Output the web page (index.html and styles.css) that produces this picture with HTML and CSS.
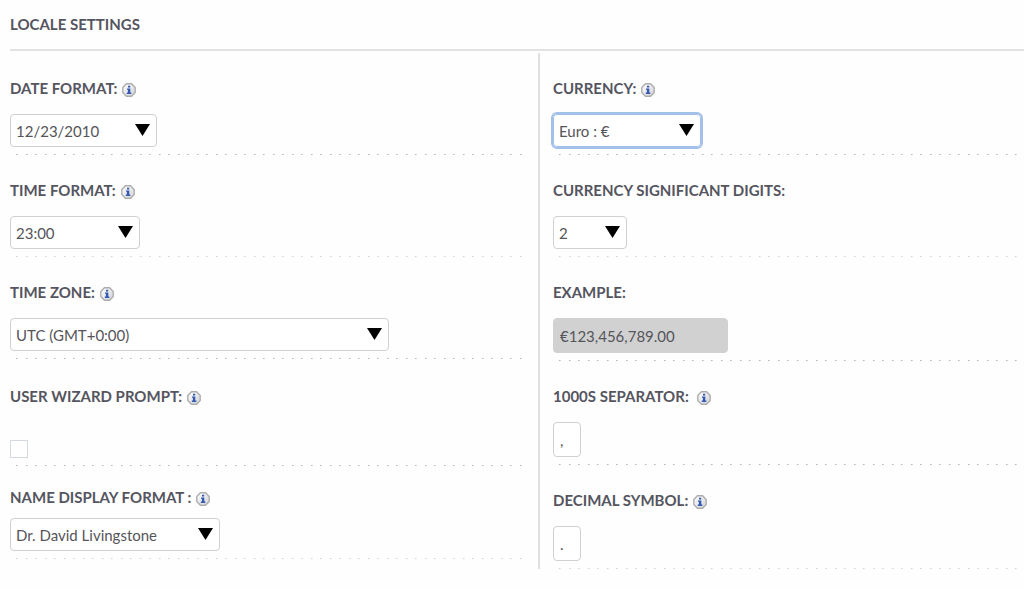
FILE: index.html
```
<!DOCTYPE html>
<html lang="en">
<head>
<meta charset="utf-8">
<title>Locale Settings</title>
<link rel="stylesheet" href="styles.css">
</head>
<body>
<svg width="0" height="0" class="defs" aria-hidden="true">
  <defs>
    <linearGradient id="shine" x1="0" y1="0" x2="1" y2="1">
      <stop offset="0" stop-color="#ffffff"/>
      <stop offset="1" stop-color="#d0d2d8"/>
    </linearGradient>
    <symbol id="info" viewBox="0 0 14 14">
      <path d="M4.4.8h5.2l3.6 3.6v5.2l-3.6 3.6H4.4L.8 9.6V4.4z" fill="url(#shine)" stroke="#adaeab" stroke-width="1.4" stroke-linejoin="round"/>
      <path d="M6 2.7h2.2v1.8H6zM5 5.5h3.3v4.1h1v1.3H4.8V9.6h1.1V6.7H5z" fill="#3558b0"/>
    </symbol>
  </defs>
</svg>
<form class="locale">
  <h1 class="title">LOCALE SETTINGS</h1>
  <div class="columns">
    <div class="column">
      <div class="field">
        <div class="caption"><label for="date">DATE FORMAT:</label><svg class="info"><use href="#info"/></svg></div>
        <div class="pick pick-date"><select id="date"><option>12/23/2010</option></select></div>
      </div>
      <div class="field faint">
        <div class="caption"><label for="time">TIME FORMAT:</label><svg class="info"><use href="#info"/></svg></div>
        <div class="pick pick-time"><select id="time"><option>23:00</option></select></div>
      </div>
      <div class="field">
        <div class="caption"><label for="zone">TIME ZONE:</label><svg class="info"><use href="#info"/></svg></div>
        <div class="pick pick-zone"><select id="zone"><option>UTC (GMT+0:00)</option></select></div>
      </div>
      <div class="field field-check">
        <div class="caption"><label for="wizard">USER WIZARD PROMPT:</label><svg class="info"><use href="#info"/></svg></div>
        <input type="checkbox" class="check" id="wizard">
      </div>
      <div class="field field-name faint">
        <div class="caption"><label for="name">NAME DISPLAY FORMAT :</label><svg class="info"><use href="#info"/></svg></div>
        <div class="pick pick-name"><select id="name"><option>Dr. David Livingstone</option></select></div>
      </div>
    </div>
    <div class="column column-right">
      <div class="field">
        <div class="caption"><label for="currency">CURRENCY:</label><svg class="info"><use href="#info"/></svg></div>
        <div class="pick pick-currency"><select id="currency" class="active"><option>Euro : €</option></select></div>
      </div>
      <div class="field faint">
        <div class="caption"><label for="digits">CURRENCY SIGNIFICANT DIGITS:</label></div>
        <div class="pick pick-digits"><select id="digits"><option>2</option></select></div>
      </div>
      <div class="field">
        <div class="caption"><label for="example">EXAMPLE:</label></div>
        <input type="text" class="text example" id="example" value="€123,456,789.00" readonly>
      </div>
      <div class="field">
        <div class="caption caption-wide"><label for="thousands">1000S SEPARATOR:</label><svg class="info"><use href="#info"/></svg></div>
        <input type="text" class="text symbol" id="thousands" value=",">
      </div>
      <div class="field faint">
        <div class="caption"><label for="decimal">DECIMAL SYMBOL:</label><svg class="info"><use href="#info"/></svg></div>
        <input type="text" class="text symbol" id="decimal" value=".">
      </div>
    </div>
  </div>
</form>
</body>
</html>
```
FILE: styles.css
```
* {
  box-sizing: border-box;
}

body {
  margin: 0;
  background: #fefefe;
  color: #55555f;
  font: 15px/24px Lato, "Liberation Sans", sans-serif;
}

.defs {
  position: absolute;
}

.locale {
  padding: 12px 0 16px 10px;
}

.title {
  margin: 0;
  padding-bottom: 13px;
  border-bottom: 2px solid #e2e2e2;
  font-size: 15px;
  font-weight: 700;
  line-height: 24px;
}

.columns {
  display: grid;
  grid-template-columns: 528fr 486fr;
  padding-top: 2px;
}

.column {
  display: flex;
  flex-direction: column;
  gap: 23px;
  padding: 23px 14px 0 0;
}

.column-right {
  padding: 23px 0 0 13px;
  border-left: 2px solid #e0e0e0;
}

.field {
  display: flex;
  flex-direction: column;
  align-items: flex-start;
  gap: 14px;
  padding-bottom: 8px;
}

/* Dotted rule under each field, two dots to a 19px tile. */
.field::after {
  content: "";
  align-self: stretch;
  height: 1px;
  margin: -7px 0 -8px 6px;
  background: repeating-linear-gradient(90deg, #b4b4b4 0 1px, #d6d6d6 1px 2px, transparent 2px 10px, #b4b4b4 10px 11px, #d6d6d6 11px 12px, transparent 12px 19px);
}

.faint::after {
  opacity: 0.6;
}

.field-check {
  gap: 32px;
  margin-top: 2px;
}

.field-check::after {
  margin-top: -25px;
}

.field-name {
  gap: 9px;
  margin-top: -4px;
}

.field-name::after {
  margin-top: -2px;
}

.caption {
  display: flex;
  align-items: center;
  gap: 5px;
  height: 24px;
  font-weight: 700;
}

.caption-wide {
  gap: 8px;
}

.info {
  width: 14px;
  height: 14px;
  margin-top: 3px;
}

.pick {
  position: relative;
  max-width: 100%;
}

.pick::after {
  content: "";
  position: absolute;
  top: 10px;
  right: 7px;
  width: 15px;
  height: 12px;
  background: #000;
  clip-path: polygon(0 0, 100% 0, 50% 100%);
  pointer-events: none;
}

select,
.text {
  display: block;
  width: 100%;
  margin: 0;
  padding: 0 6px;
  border: 1px solid #d0d0d3;
  border-radius: 4px;
  background: #fff;
  color: #55555a;
  font: 15px/24px Lato, "Liberation Sans", sans-serif;
  appearance: none;
}

select {
  height: 33px;
  padding: 0 24px 0 5px;
}

.active,
select:focus {
  border-color: #a3c0e8;
  outline: 2px solid #a3c0e8;
}

.pick-date {
  width: 147px;
}

.pick-time {
  width: 130px;
}

.pick-zone {
  width: 379px;
}

.pick-name {
  width: 210px;
}

.pick-currency {
  width: 148px;
}

.pick-digits {
  width: 74px;
}

.text {
  height: 35px;
}

.example {
  width: 175px;
  border-color: #d1d1d2;
  background: #d1d1d2;
}

.symbol {
  width: 28px;
}

.check {
  width: 18px;
  height: 18px;
  margin: 0;
  border: 1px solid #d3d9de;
  background: #fff;
  appearance: none;
}

.check:checked {
  background: #7f9fcc;
}
```
